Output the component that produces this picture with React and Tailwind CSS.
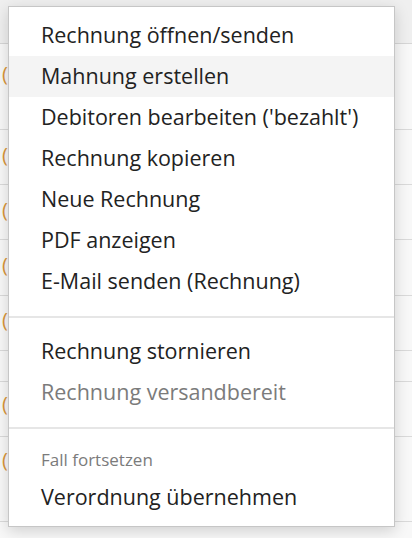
import React from 'react'

const rows = [
  { h: 'h-[86px]', paren: 'pt-[20px]' },
  { h: 'h-[55px]', paren: 'pt-[15px]' },
  { h: 'h-[55px]', paren: 'pt-[15px]' },
  { h: 'h-[56px]', paren: 'pt-[15px]' },
  { h: 'h-[55px]', paren: 'pt-[14px]' },
  { h: 'h-[31px]', paren: null },
  { h: 'h-[55px]', paren: 'pt-[12px]' },
  { h: 'h-[85px]', paren: 'pt-[13px]' },
]

const group1 = [
  'Rechnung öffnen/senden',
  'Mahnung erstellen',
  "Debitoren bearbeiten ('bezahlt')",
  'Rechnung kopieren',
  'Neue Rechnung',
  'PDF anzeigen',
  'E-Mail senden (Rechnung)',
]

function Item({ label, active, disabled }) {
  return (
    <div
      className={
        'h-[41px] px-[32px] pb-[2px] flex items-center text-[21.5px] leading-none whitespace-nowrap ' +
        (active ? 'bg-[#f4f4f4] ' : '') +
        (disabled ? 'text-[#7b7b7b]' : 'text-[#222222]')
      }
    >
      {label}
    </div>
  )
}

export default function App() {
  return (
    <div
      className="relative w-[412px] h-[538px] overflow-hidden bg-[#f8f8f8]"
      style={{ fontFamily: '"Open Sans", "Noto Sans", sans-serif' }}
    >
      {/* table behind the menu */}
      <div className="flex flex-col">
        <div className="h-[44px] bg-[#efefef] border-b border-[#d6d6d6]" />
        {rows.map((r, i) => (
          <div key={i} className={r.h + ' border-b border-[#dadada] pl-[2px]'}>
            {r.paren && (
              <div className={r.paren + ' text-[20px] leading-none text-[#d9963a]'}>(</div>
            )}
          </div>
        ))}
      </div>

      {/* context menu */}
      <div className="absolute left-[8px] top-[6px] w-[387px] bg-white border border-[#c6c6c6] py-[8px] shadow-[0_4px_14px_rgba(0,0,0,0.16)]">
        {group1.map((l, i) => (
          <Item key={l} label={l} active={i === 1} />
        ))}
        <div className="mt-[14px] mb-[13px] h-[2px] bg-[#e6e6e6]" />
        <Item label="Rechnung stornieren" />
        <Item label="Rechnung versandbereit" disabled />
        <div className="mt-[14px] h-[2px] bg-[#e6e6e6]" />
        <div className="h-[48px] px-[32px] pt-[13px] flex items-center text-[17px] leading-none font-medium text-[#7b7b7b]">
          Fall fortsetzen
        </div>
        <Item label="Verordnung übernehmen" />
      </div>
    </div>
  )
}
